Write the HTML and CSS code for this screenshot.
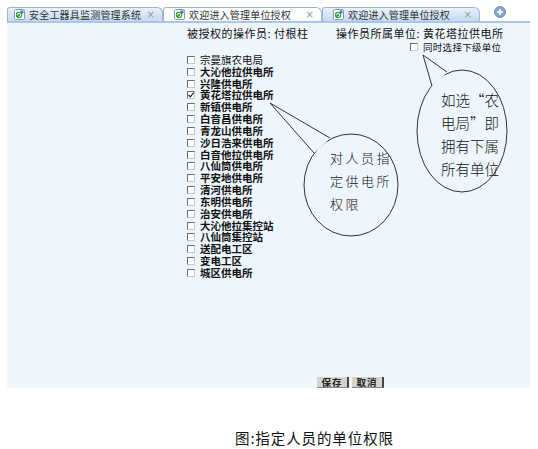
FILE: index.html
```html
<!DOCTYPE html>
<html lang="zh">
<head>
<meta charset="utf-8">
<link rel="stylesheet" href="styles.css">
</head>
<body>
<div class="frame">
  <div class="tabs">
    <div class="tab t1">
      <svg class="ticon" viewBox="0 0 11 11" width="11" height="11"><rect x="0.5" y="0.5" width="10" height="10" rx="1" fill="#fff" stroke="#8a9bb0"/><circle cx="5" cy="6" r="3.2" fill="#3aa63a"/><path d="M3.5 6 a1.6 1.6 0 1 1 1.6 1.6" fill="none" stroke="#fff" stroke-width="1"/><rect x="6.5" y="1.5" width="3" height="3" fill="#3a78c8"/></svg>
      <span class="tlabel">安全工器具监测管理系统</span>
      <span class="tclose">×</span>
    </div>
    <div class="tab t2">
      <svg class="ticon" viewBox="0 0 11 11" width="11" height="11"><rect x="0.5" y="0.5" width="10" height="10" rx="1" fill="#fff" stroke="#8a9bb0"/><circle cx="5" cy="6" r="3.2" fill="#3aa63a"/><path d="M3.5 6 a1.6 1.6 0 1 1 1.6 1.6" fill="none" stroke="#fff" stroke-width="1"/><rect x="6.5" y="1.5" width="3" height="3" fill="#3a78c8"/></svg>
      <span class="tlabel">欢迎进入管理单位授权</span>
      <span class="tclose">×</span>
    </div>
    <div class="tab t3">
      <svg class="ticon" viewBox="0 0 11 11" width="11" height="11"><rect x="0.5" y="0.5" width="10" height="10" rx="1" fill="#fff" stroke="#8a9bb0"/><circle cx="5" cy="6" r="3.2" fill="#3aa63a"/><path d="M3.5 6 a1.6 1.6 0 1 1 1.6 1.6" fill="none" stroke="#fff" stroke-width="1"/><rect x="6.5" y="1.5" width="3" height="3" fill="#3a78c8"/></svg>
      <span class="tlabel">欢迎进入管理单位授权</span>
      <span class="tclose">×</span>
    </div>
    <svg class="plus" viewBox="0 0 12 12" width="12" height="12"><circle cx="6" cy="6" r="5.5" fill="#8aa6cc" stroke="#6f8db8"/><path d="M6 3v6M3 6h6" stroke="#fff" stroke-width="1.6"/></svg>
  </div>
  <div class="content">
    <div class="head">
      <span class="who">被授权的操作员: 付根柱</span>
      <span class="unit">操作员所属单位: 黄花塔拉供电所</span>
    </div>
    <div class="sub">
      <span class="box"></span><span class="sublabel">同时选择下级单位</span>
    </div>
    <ul class="list">
      <li class="plain"><span class="box"></span><span class="lt">宗曼旗农电局</span></li>
      <li><span class="box"></span><span class="lt">大沁他拉供电所</span></li>
      <li><span class="box"></span><span class="lt">兴隆供电所</span></li>
      <li><span class="box checked"><svg viewBox="0 0 8 8" width="8" height="8"><path d="M1.5 3.8 L3.3 5.8 L6.8 1.6" fill="none" stroke="#222" stroke-width="1.2"/></svg></span><span class="lt">黄花塔拉供电所</span></li>
      <li><span class="box"></span><span class="lt">新镇供电所</span></li>
      <li><span class="box"></span><span class="lt">白音昌供电所</span></li>
      <li><span class="box"></span><span class="lt">青龙山供电所</span></li>
      <li><span class="box"></span><span class="lt">沙日浩来供电所</span></li>
      <li><span class="box"></span><span class="lt">白音他拉供电所</span></li>
      <li><span class="box"></span><span class="lt">八仙筒供电所</span></li>
      <li><span class="box"></span><span class="lt">平安地供电所</span></li>
      <li><span class="box"></span><span class="lt">清河供电所</span></li>
      <li><span class="box"></span><span class="lt">东明供电所</span></li>
      <li><span class="box"></span><span class="lt">治安供电所</span></li>
      <li><span class="box"></span><span class="lt">大沁他拉集控站</span></li>
      <li><span class="box"></span><span class="lt">八仙筒集控站</span></li>
      <li><span class="box"></span><span class="lt">送配电工区</span></li>
      <li><span class="box"></span><span class="lt">变电工区</span></li>
      <li><span class="box"></span><span class="lt">城区供电所</span></li>
    </ul>
    <div class="buttons">
      <span class="btn">保存</span>
      <span class="btn">取消</span>
    </div>
  </div>
</div>
<div class="caption">图:指定人员的单位权限</div>

<svg class="callouts" viewBox="0 0 538 449" width="538" height="449">
  <ellipse cx="351" cy="185" rx="47" ry="51" fill="#eef6fd" stroke="#333" stroke-width="1"/>
  <polygon points="270,103 330,138.5 314,153" fill="#eef6fd"/>
  <path d="M330 138 L270 103 L314 153" fill="none" stroke="#333" stroke-width="1"/>
  <text class="ctext1" x="330" y="163">对人员指</text>
  <text class="ctext1" x="330" y="186">定供电所</text>
  <text class="ctext1" x="330" y="209">权限</text>

  <ellipse cx="462" cy="131" rx="45" ry="61" fill="#eef6fd" stroke="#333" stroke-width="1"/>
  <polygon points="423,55 447,72.5 432,86.5" fill="#eef6fd"/>
  <path d="M447 72 L423 55 L432 86" fill="none" stroke="#333" stroke-width="1"/>
  <text class="ctext2" x="441" y="106">如选“农</text>
  <text class="ctext2" x="441" y="129">电局”即</text>
  <text class="ctext2" x="441" y="152">拥有下属</text>
  <text class="ctext2" x="441" y="175">所有单位</text>
</svg>
</body>
</html>
```

FILE: styles.css
```css
html, body {
  margin: 0;
  padding: 0;
  background: #fff;
}
body {
  position: relative;
  width: 538px;
  height: 449px;
  font-family: "Noto Sans CJK SC", "Liberation Sans", sans-serif;
  color: #111;
}
.frame {
  margin: 7px 0 0 7px;
  width: 523px;
}
.tabs {
  display: flex;
  align-items: flex-end;
  height: 14px;
  border-bottom: 2px solid #a8c6e8;
}
.tab {
  box-sizing: border-box;
  height: 14px;
  display: flex;
  align-items: center;
  border: 1px solid #9db5d2;
  border-bottom: none;
  border-radius: 3px 6px 0 0;
  background: linear-gradient(#e9f1fb, #c6d9ef);
  padding-left: 6px;
  font-size: 10px;
  letter-spacing: 0.2px;
  color: #333;
  white-space: nowrap;
  overflow: hidden;
}
.t1 { width: 156px; }
.t2 { width: 159px; background: #fbfdff; padding-left: 10px; }
.t3 { width: 158px; padding-left: 10px; }
.ticon { flex: none; margin-right: 4px; }
.tlabel { line-height: 12px; }
.tclose {
  margin-left: auto;
  margin-right: 7px;
  color: #999;
  font-size: 10px;
  font-family: "DejaVu Sans", sans-serif;
}
.plus {
  margin-left: 14px;
  margin-bottom: 3px;
}
.content {
  box-sizing: border-box;
  height: 365px;
  background: #eef6fd;
  display: flex;
  flex-direction: column;
  padding-top: 4px;
}
.head {
  display: flex;
  padding-left: 180px;
  font-size: 11px;
  letter-spacing: 0.5px;
  line-height: 12px;
  white-space: nowrap;
}
.who { width: 149px; }
.sub {
  display: flex;
  align-items: center;
  margin-top: 2px;
  padding-left: 403px;
  height: 12px;
}
.sublabel {
  margin-left: 5px;
  font-size: 9.5px;
  letter-spacing: 0.3px;
  line-height: 12px;
}
.box {
  box-sizing: border-box;
  flex: none;
  width: 8px;
  height: 8px;
  background: #fff;
  border: 1px solid #6e6e6e;
  border-right-color: #c8c8c8;
  border-bottom-color: #c8c8c8;
  display: inline-flex;
  align-items: center;
  justify-content: center;
  position: relative;
}
.box.checked svg {
  position: absolute;
  left: -1px;
  top: -1px;
}
.list {
  list-style: none;
  margin: 1px 0 0;
  padding: 0 0 0 180px;
}
.list li {
  display: flex;
  align-items: center;
  height: 11.83px;
  font-size: 10.5px;
  font-weight: bold;
  line-height: 10px;
  white-space: nowrap;
}
.lt {
  display: block;
  height: 10px;
  line-height: 10px;
}
.list li.plain { font-weight: normal; }
.list .box { margin-right: 5px; }
.buttons {
  margin-top: auto;
  display: flex;
  gap: 3px;
  padding-left: 310px;
}
.btn {
  box-sizing: border-box;
  width: 32px;
  height: 11px;
  background: #d6d3cc;
  border-right: 2px solid #444;
  border-bottom: 1px solid #888;
  font-size: 9.5px;
  font-weight: bold;
  line-height: 11px;
  text-align: center;
  letter-spacing: 1px;
  color: #222;
}
.caption {
  margin-top: 42px;
  padding-left: 235px;
  font-size: 14.5px;
  letter-spacing: 0.9px;
  line-height: 16px;
  color: #111;
  white-space: nowrap;
}
.callouts {
  position: absolute;
  left: 0;
  top: 0;
  pointer-events: none;
}
.ctext1 {
  font-size: 13px;
  font-weight: 300;
  letter-spacing: 2.5px;
  fill: #111;
}
.ctext2 {
  font-size: 14.5px;
  font-weight: 300;
  fill: #111;
}
```
